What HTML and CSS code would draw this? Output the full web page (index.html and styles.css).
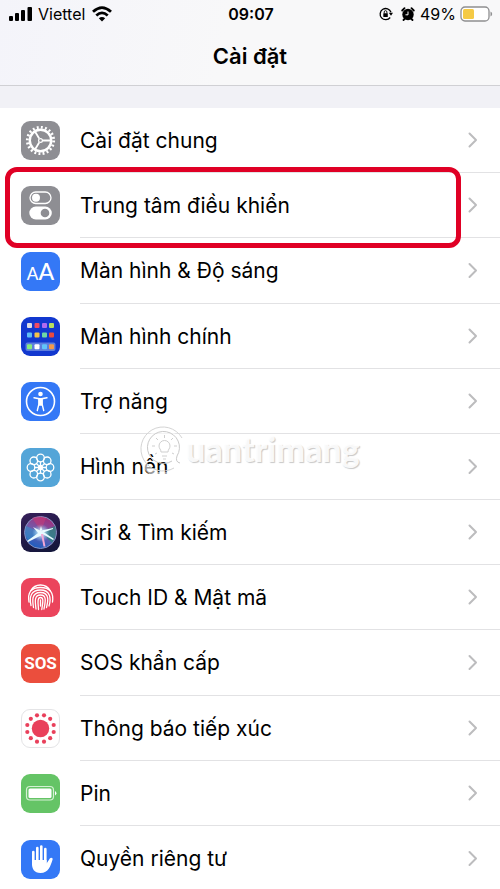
FILE: index.html
```html
<!DOCTYPE html>
<html lang="vi">
<head>
    <meta charset="UTF-8">
    <meta name="viewport" content="width=device-width, initial-scale=1.0">
    <title>Cài đặt</title>
    <link rel="stylesheet" href="styles.css">
</head>
<body>
    <header class="header">
        <div class="status-bar">
            <div class="status-left">
                <svg width="24" height="16" viewBox="0 0 24 16">
                    <rect x="0" y="10" width="4" height="5" rx="1"/>
                    <rect x="6" y="7" width="4" height="8" rx="1"/>
                    <rect x="12" y="4" width="4" height="11" rx="1"/>
                    <rect x="18.500" y="1" width="4.500" height="14" rx="1"/>
                </svg>
                <span class="carrier">Viettel</span>
                <svg width="20" height="16" viewBox="0 0 20 16" fill="none" stroke="#000" stroke-width="2.800">
                    <path d="M1 5.800Q10-2.500 19 5.800M4.300 9.500Q10 4.300 15.700 9.500"/>
                    <path d="M10 15.500L6.800 12.300Q10 9.500 13.200 12.300Z" fill="#000" stroke="none"/>
                </svg>
            </div>
            <span class="time">09:07</span>
            <div class="status-right">
                <svg width="14" height="14" viewBox="0 0 14 14">
                    <path d="M11.200 10.500A5.600 5.600 0 1 1 12 5.200" fill="none" stroke="#000" stroke-width="1.300"/>
                    <path d="M9.800 5.800H14L12 8.800Z"/>
                    <rect x="4.300" y="6.200" width="4.500" height="3.800" rx=".5"/>
                    <path d="M5.200 6.500V5a1.350 1.350 0 0 1 2.700 0v1.500" fill="none" stroke="#000" stroke-width=".9"/>
                </svg>
                <svg class="alarm" width="14" height="14" viewBox="0 0 14 14">
                    <circle cx="7" cy="7.500" r="5.700"/>
                    <path d="M1.200 3.500L3.500 1.200M10.500 1.200l2.300 2.300M2.500 13l1.500-1.500M11.500 13l-1.500-1.500" stroke="#000" stroke-width="1.800" stroke-linecap="round"/>
                    <path d="M7 4.500v3.300H4.500" fill="none" stroke="#fff"/>
                </svg>
                <span>49%</span>
                <svg width="33" height="16" viewBox="0 0 33 16">
                    <rect x="1" y="1" width="28" height="14" rx="4" fill="#fff" stroke="#8e8e90" stroke-width="1.300"/>
                    <rect x="3" y="3" width="11" height="10" rx="1.500" fill="#f5ca45"/>
                    <path d="M30.500 5.500a2.700 2.700 0 0 1 0 5z" fill="#8e8e90"/>
                </svg>
            </div>
        </div>
        <h1>Cài đặt</h1>
    </header>

    <ul class="settings">
        <li>
            <a href="#">
                <svg class="icon gray" viewBox="0 0 39 39" fill="none" stroke="#fff">
                    <circle cx="19.500" cy="19.500" r="13.200" stroke-width="2.800" stroke-dasharray="1.900 2.246"/>
                    <circle cx="19.500" cy="19.500" r="10.700" stroke-width="2.400"/>
                    <path d="M21.500 19.500h8.500M18.200 17.500l-4.500-7.500M18.200 21.500l-4.500 7.500" stroke-width="1.800"/>
                    <circle cx="19.500" cy="19.500" r="1.900" stroke-width="1.200"/>
                </svg>
                <span class="label">Cài đặt chung</span>
                <svg class="chevron" viewBox="0 0 10 16"><path d="M1.500 1.500L8 8l-6.500 6.500"/></svg>
            </a>
        </li>
        <li class="marked">
            <a href="#">
                <svg class="icon gray" viewBox="0 0 39 39">
                    <rect x="9" y="6" width="21" height="11.500" rx="5.750" fill="none" stroke="#fff" stroke-width="1.300"/>
                    <circle cx="15" cy="11.800" r="4" fill="#fff"/>
                    <rect x="8.300" y="20.500" width="22.500" height="13" rx="6.500" fill="#fff"/>
                    <circle cx="24" cy="27" r="4.300" fill="#8e8e93"/>
                </svg>
                <span class="label">Trung tâm điều khiển</span>
                <svg class="chevron" viewBox="0 0 10 16"><path d="M1.500 1.500L8 8l-6.500 6.500"/></svg>
            </a>
        </li>
        <li>
            <a href="#">
                <span class="icon blue letters"><span class="small-a">A</span>A</span>
                <span class="label">Màn hình &amp; Độ sáng</span>
                <svg class="chevron" viewBox="0 0 10 16"><path d="M1.500 1.500L8 8l-6.500 6.500"/></svg>
            </a>
        </li>
        <li>
            <a href="#">
                <svg class="icon navy" viewBox="0 0 39 39">
                    <rect x="4.500" y="25.500" width="30" height="8.500" rx="2" fill="#5c7ddd"/>
                    <rect x="6" y="6" width="5" height="5" rx="1" fill="#dcdde5"/>
                    <rect x="13.500" y="6" width="5" height="5" rx="1" fill="#ef4b63"/>
                    <rect x="21" y="6" width="5" height="5" rx="1" fill="#b06af0"/>
                    <rect x="28" y="6" width="5" height="5" rx="1" fill="#b7de60"/>
                    <rect x="6" y="15.500" width="5" height="5" rx="1" fill="#5fbdf5"/>
                    <rect x="13.500" y="15.500" width="5" height="5" rx="1" fill="#f6c34a"/>
                    <rect x="21" y="15.500" width="5" height="5" rx="1" fill="#6fd8a5"/>
                    <rect x="28" y="15.500" width="5" height="5" rx="1" fill="#ea4a3e"/>
                    <rect x="6" y="27.200" width="5" height="5" rx="1" fill="#86ec7c"/>
                    <rect x="13.500" y="27.200" width="5" height="5" rx="1" fill="#fff"/>
                    <rect x="21" y="27.200" width="5" height="5" rx="1" fill="#62c5fa"/>
                    <rect x="28" y="27.200" width="5" height="5" rx="1" fill="#f39a4c"/>
                </svg>
                <span class="label">Màn hình chính</span>
                <svg class="chevron" viewBox="0 0 10 16"><path d="M1.500 1.500L8 8l-6.500 6.500"/></svg>
            </a>
        </li>
        <li>
            <a href="#">
                <svg class="icon blue" viewBox="0 0 39 39">
                    <circle cx="19.500" cy="19.500" r="14" fill="none" stroke="#fff" stroke-width="1.600"/>
                    <circle cx="19.500" cy="12" r="2.300" fill="#fff"/>
                    <path d="M13 15.800L18 16.700v5L16.300 28.500M26 15.800L21 16.700v5L22.700 28.500" fill="none" stroke="#fff" stroke-width="1.400" stroke-linecap="round"/>
                    <path d="M17.300 16h4.400v6l-.7 1.700h-3l-.7-1.700z" fill="#fff"/>
                </svg>
                <span class="label">Trợ năng</span>
                <svg class="chevron" viewBox="0 0 10 16"><path d="M1.500 1.500L8 8l-6.500 6.500"/></svg>
            </a>
        </li>
        <li>
            <a href="#">
                <svg class="icon sky" viewBox="0 0 39 39" fill="none" stroke="#fff" stroke-width="1.300">
                    <circle cx="19.500" cy="10" r="3.800"/>
                    <circle cx="26.200" cy="12.800" r="3.800"/>
                    <circle cx="29" cy="19.500" r="3.800"/>
                    <circle cx="26.200" cy="26.200" r="3.800"/>
                    <circle cx="19.500" cy="29" r="3.800"/>
                    <circle cx="12.800" cy="26.200" r="3.800"/>
                    <circle cx="10" cy="19.500" r="3.800"/>
                    <circle cx="12.800" cy="12.800" r="3.800"/>
                    <path d="M19.500 17V13.500M21.300 17.700l2.500-2.500M22 19.500h3.500M21.300 21.300l2.500 2.500M19.500 22v3.500M17.700 21.300l-2.500 2.500M17 19.500h-3.500M17.700 17.700l-2.500-2.500"/>
                    <circle cx="19.500" cy="19.500" r="2" fill="#fff"/>
                </svg>
                <span class="label">Hình nền</span>
                <svg class="chevron" viewBox="0 0 10 16"><path d="M1.500 1.500L8 8l-6.500 6.500"/></svg>
            </a>
        </li>
        <li>
            <a href="#">
                <svg class="icon siri" viewBox="0 0 39 39">
                    <defs>
                        <linearGradient id="orb" x1="0.700" y1="0" x2="0.300" y2="1">
                            <stop offset="0" stop-color="#a72a76"/>
                            <stop offset=".45" stop-color="#7558a8"/>
                            <stop offset="1" stop-color="#175fc0"/>
                        </linearGradient>
                        <radialGradient id="glow">
                            <stop offset="0" stop-color="#fff"/>
                            <stop offset=".3" stop-color="#d9f4ff" stop-opacity=".8"/>
                            <stop offset="1" stop-color="#7fd0f5" stop-opacity="0"/>
                        </radialGradient>
                    </defs>
                    <circle cx="19.500" cy="19.500" r="16" fill="url(#orb)" stroke="#8793c4"/>
                    <path d="M20 19L34 13Q37 22 31 30Z" fill="#27877f" opacity=".75"/>
                    <path d="M19 19L5 13Q2 22 8 28Z" fill="#2c9bd0" opacity=".5"/>
                    <path d="M20 18L11 5Q18 2 25 5Z" fill="#c43c78" opacity=".6"/>
                    <circle cx="20" cy="20" r="9" fill="url(#glow)"/>
                    <path d="M20 18L6 28l1 1 14-7zM18 19l14 8 1-1-12-8zM18 21l14-5v-1l-14 3zM18 20l2-7 2 7zM20 18l-8-4 6 7z" fill="#e8fbff"/>
                    <path d="M20 21l2.500 12.500h2L22 21z" fill="#f4a8d6"/>
                </svg>
                <span class="label">Siri &amp; Tìm kiếm</span>
                <svg class="chevron" viewBox="0 0 10 16"><path d="M1.500 1.500L8 8l-6.500 6.500"/></svg>
            </a>
        </li>
        <li>
            <a href="#">
                <svg class="icon pink" viewBox="0 0 39 39" fill="none" stroke="#fff" stroke-width="1.300" stroke-linecap="round">
                    <path d="M9.500 13Q13 7 19.500 7T29.500 13"/>
                    <path d="M8 24Q5.500 9.500 19.500 9.500T31.500 24"/>
                    <path d="M10 27.500C8 19 10 12 19.500 12s11 8 8.500 16"/>
                    <path d="M12.500 29.500c-1-6-2.500-15 7-15s7.500 9 6 15"/>
                    <path d="M15 31c-.6-6-2.500-14 4.500-14s4.500 8 3.500 14"/>
                    <path d="M17.500 31.500c0-4-2-12 2-12s1.800 7 1.300 12"/>
                    <path d="M19.500 22v6"/>
                </svg>
                <span class="label">Touch ID &amp; Mật mã</span>
                <svg class="chevron" viewBox="0 0 10 16"><path d="M1.500 1.500L8 8l-6.500 6.500"/></svg>
            </a>
        </li>
        <li>
            <a href="#">
                <span class="icon red sos">SOS</span>
                <span class="label">SOS khẩn cấp</span>
                <svg class="chevron" viewBox="0 0 10 16"><path d="M1.500 1.500L8 8l-6.500 6.500"/></svg>
            </a>
        </li>
        <li>
            <a href="#">
                <svg class="icon white" viewBox="0 0 39 39" fill="#e9405b">
                    <circle cx="19.500" cy="19.500" r="9.200"/>
                    <circle cx="23.200" cy="5.600" r="2.200"/>
                    <circle cx="29.700" cy="9.300" r="2.200"/>
                    <circle cx="33.400" cy="15.800" r="2.200"/>
                    <circle cx="33.400" cy="23.200" r="2.200"/>
                    <circle cx="29.700" cy="29.700" r="2.200"/>
                    <circle cx="23.200" cy="33.400" r="2.200"/>
                    <circle cx="15.800" cy="33.400" r="2.200"/>
                    <circle cx="9.300" cy="29.700" r="2.200"/>
                    <circle cx="5.600" cy="23.200" r="2.200"/>
                    <circle cx="5.600" cy="15.800" r="2.200"/>
                    <circle cx="9.300" cy="9.300" r="2.200"/>
                    <circle cx="15.800" cy="5.600" r="2.200"/>
                </svg>
                <span class="label">Thông báo tiếp xúc</span>
                <svg class="chevron" viewBox="0 0 10 16"><path d="M1.500 1.500L8 8l-6.500 6.500"/></svg>
            </a>
        </li>
        <li>
            <a href="#">
                <svg class="icon green" viewBox="0 0 39 39" fill="#fff">
                    <rect x="5.500" y="12.500" width="27" height="13.500" rx="3.500" fill="none" stroke="#d5f0d4" stroke-width="1.200"/>
                    <rect x="7.500" y="14.500" width="23" height="9.500" rx="1.500"/>
                    <path d="M34 17a2.500 2.500 0 0 1 0 4.500z"/>
                </svg>
                <span class="label">Pin</span>
                <svg class="chevron" viewBox="0 0 10 16"><path d="M1.500 1.500L8 8l-6.500 6.500"/></svg>
            </a>
        </li>
        <li>
            <a href="#">
                <svg class="icon blue" viewBox="0 0 39 39">
                    <path d="M12.300 12v12M16.300 8v14M20.300 6.500v15M24.300 9v14" stroke="#fff" stroke-width="2.600" stroke-linecap="round"/>
                    <path d="M11 20h14.600v3.500l3.200-5c1-1.500 3.400-.8 2.800 1C29.500 26 27.500 33 19.500 33 13 33 11 28.500 11 24z" fill="#fff"/>
                </svg>
                <span class="label">Quyền riêng tư</span>
                <svg class="chevron" viewBox="0 0 10 16"><path d="M1.500 1.500L8 8l-6.500 6.500"/></svg>
            </a>
        </li>
    </ul>

    <div class="watermark">
        <svg width="48" height="50" viewBox="0 0 48 50" fill="none">
            <path d="M43 41A21 21 0 1 1 45 24c0 11-5 17-12 16l10 7" stroke="#fff" stroke-width="6" stroke-opacity=".6"/>
            <path d="M36 44A22 22 0 1 1 44 14" stroke="#d4d4d4"/>
            <path d="M34 37A16 16 0 1 1 39 32q-2 6 3 7" stroke="#c9c9c9"/>
            <path d="M23 28c0-3-2-3-2-6a5.500 5.500 0 0 1 11 0c0 3-2 3-2 6zM24 32h5M25 35h3" stroke="#cfcfcf"/>
            <path d="M26.500 11v3M18 14l2 2M35 14l-2 2M14 22h3M39 22h-3M17 30l2-1M36 30l-2-1" stroke="#cfcfcf"/>
        </svg>
        <span>uantrimang</span>
    </div>
</body>
</html>
```

FILE: styles.css
```css
* {
    box-sizing: border-box;
}
body {
    position: relative;
    margin: 0;
    font-family: Inter, "Noto Sans", sans-serif;
    background: #fff;
    color: #000;
    overflow-x: hidden;
}
.header {
    height: 86px;
    background: linear-gradient(100deg, #f4f4fa, #f8f8f9 45%);
    border-bottom: 1px solid #d0d0d4;
}
.status-bar {
    display: grid;
    grid-template-columns: 1fr auto 1fr;
    align-items: center;
    height: 28px;
    padding: 0 7px 0 9px;
    font-size: 16px;
}
.status-left, .status-right {
    display: flex;
    align-items: center;
}
.status-right {
    justify-content: flex-end;
    gap: 4px;
}
.carrier {
    margin: 0 7px 0 5px;
}
.alarm {
    margin: 0 1px 0 4px;
}
.time {
    font-weight: 600;
}
h1 {
    margin: 14px 0 0;
    font-size: 22px;
    line-height: 28px;
    font-weight: 600;
    text-align: center;
}
.settings {
    margin: 0;
    padding: 0;
    list-style: none;
    border-top: 22px solid #f1f1f6;
}
.settings a {
    display: flex;
    align-items: center;
    height: 65px;
    padding-left: 21px;
    color: #000;
    text-decoration: none;
}
.settings li:nth-child(3n) a {
    height: 66px;
}
.icon {
    flex: none;
    width: 39px;
    height: 39px;
    margin-right: 20px;
    border-radius: 9px;
}
.label {
    flex: 1;
    align-self: stretch;
    display: flex;
    align-items: center;
    font-size: 21px;
    border-bottom: 1px solid #e2e2e4;
}
.chevron {
    box-sizing: content-box;
    align-self: stretch;
    width: 10px;
    padding-right: 22px;
    border-bottom: 1px solid #e2e2e4;
    fill: none;
    stroke: #bcbcbe;
    stroke-width: 2;
    stroke-linecap: round;
    stroke-linejoin: round;
}
.gray {
    background: #8e8e93;
}
.blue {
    background: #3478f6;
}
.navy {
    background: #1238cf;
}
.sky {
    background: #54a5d8;
}
.siri {
    background: linear-gradient(160deg, #36205a, #101538);
}
.pink {
    background: #eb445c;
}
.red {
    background: #eb4e3d;
}
.white {
    background: #fff;
    border: 1px solid #e4e4e6;
}
.green {
    background: #65c466;
}
.letters, .sos {
    display: flex;
    justify-content: center;
    color: #fff;
}
.letters {
    align-items: baseline;
    font-family: Lato, sans-serif;
    font-size: 23px;
    font-weight: 500;
    line-height: 39px;
}
.small-a {
    font-size: 17px;
}
.sos {
    align-items: center;
    font-family: "Liberation Sans Narrow", Roboto, sans-serif;
    font-size: 17px;
    font-weight: 700;
}
/* red frame around the row to tap */
.marked {
    position: relative;
}
.marked::after {
    content: "";
    position: absolute;
    top: -6px;
    left: 5px;
    right: 39px;
    bottom: -10px;
    border: 5px solid #e00025;
    border-radius: 12px;
    pointer-events: none;
}
.watermark {
    position: absolute;
    top: 421px;
    left: 138px;
    display: flex;
    align-items: center;
    color: rgba(255, 255, 255, 0.9);
    font-family: Lato, sans-serif;
    font-size: 34px;
    line-height: 56px;
    font-weight: 900;
    text-shadow: 1px 1px 1px rgba(0, 0, 0, 0.22);
    pointer-events: none;
}
```
